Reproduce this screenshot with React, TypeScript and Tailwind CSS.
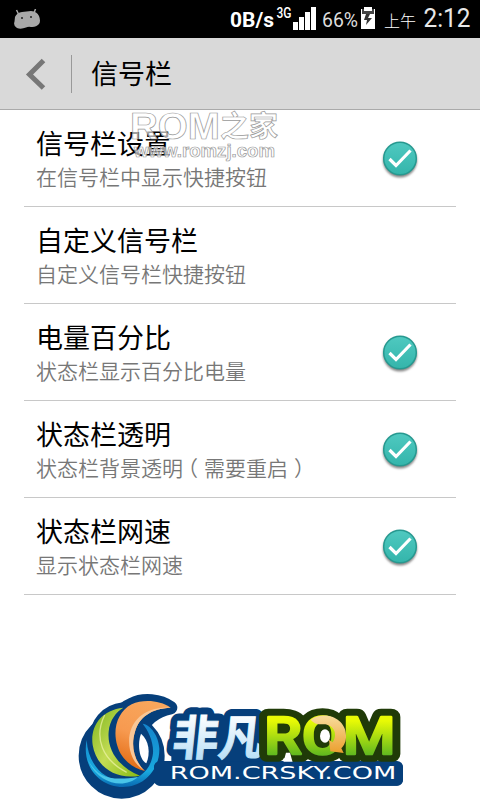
const rows = [
  { title: "信号栏设置", summary: "在信号栏中显示快捷按钮", checked: true },
  { title: "自定义信号栏", summary: "自定义信号栏快捷按钮", checked: false },
  { title: "电量百分比", summary: "状态栏显示百分比电量", checked: true },
  { title: "状态栏透明", summary: "状态栏背景透明（需要重启）", checked: true },
  { title: "状态栏网速", summary: "显示状态栏网速", checked: true },
];

function StatusBar() {
  return (
    <div className="flex h-[38px] items-center bg-black text-white">
      <svg className="ml-[14px]" width="27" height="20" viewBox="0 0 27 20">
        <path d="M2.500 1 4.500 5M21.500 0 20 4" stroke="#a9a9a9" strokeWidth="1.500" />
        <path
          d="M1 8Q3 3.500 8 3L17 2Q23 2.500 25 7Q27 12 25 15Q22 18.500 17 18Q14 17.500 12 18.500Q7 20.500 3 19Q-1 17 .5 12.500Z"
          fill="#a9a9a9"
        />
        <circle cx="8" cy="9" r="1" fill="#222" />
        <circle cx="17" cy="8" r="1" fill="#222" />
      </svg>
      <div className="relative ml-auto h-full w-[250px]">
        <svg width="250" height="38" viewBox="230 0 250 38" fill="#fff">
          <g fontFamily="Roboto, sans-serif">
            <text x="230" y="27" fontSize="20" fontWeight="700" textLength="44" lengthAdjust="spacingAndGlyphs">0B/s</text>
            <text x="276.500" y="17.500" fontSize="14" fontWeight="500" textLength="15" lengthAdjust="spacingAndGlyphs">3G</text>
            <text x="322" y="27" fontSize="20" textLength="36" lengthAdjust="spacingAndGlyphs" fill="#ddd">66%</text>
            <text x="423.500" y="27" fontSize="25" textLength="47" lengthAdjust="spacingAndGlyphs" fill="#e8e8e8">2:12</text>
          </g>
          <text x="384" y="26.500" fontSize="16" fontFamily="'Noto Sans CJK SC', sans-serif" fontWeight="300">上午</text>
          <path d="M293 22h5v8h-5zM299 17h5v13h-5zM305 12h5v18h-5zM311 7h5v23h-5z" />
          <path d="M364 7h8v2h3v20h-14V9h3z" />
          <path d="M362 9h2v2h8V9h2v5h-12z" fill="#444" />
          <path d="M366 14h4l-2 4h4l-6 7 1-5h-3z" fill="#333" />
        </svg>
      </div>
    </div>
  );
}

function Header() {
  return (
    <header className="flex h-[72px] items-center border-b border-[#aaa] bg-[#d9d9d9]">
      <svg className="ml-[25px]" width="22" height="32" viewBox="0 0 22 32">
        <path d="M18.500 2.500 4.500 16.500 18.500 30" fill="none" stroke="#777" strokeWidth="5" />
      </svg>
      <div className="ml-6 h-[38px] w-px bg-[#999]" />
      <h1 className="-mt-[2px] ml-[19px] text-[27px] leading-[40px]">信号栏</h1>
    </header>
  );
}

function Check() {
  return (
    <svg className="mt-[3px] mr-[37px]" width="38" height="40" viewBox="0 0 38 40">
      <defs>
        <linearGradient id="teal" x2="0" y2="1">
          <stop stopColor="#4fc9c0" />
          <stop offset="1" stopColor="#34b5ab" />
        </linearGradient>
        <filter id="soft" x="-20%" y="-20%" width="140%" height="140%">
          <feGaussianBlur stdDeviation="1" />
        </filter>
      </defs>
      <circle cx="19" cy="20.500" r="17" fill="#888" filter="url(#soft)" />
      <circle cx="19" cy="18.500" r="16.300" fill="url(#teal)" stroke="#279990" strokeWidth="1.500" />
      <path d="m8.500 19 6.500 6.500L29.500 10.500" fill="none" stroke="#fff" strokeWidth="3.200" />
    </svg>
  );
}

function Watermark() {
  return (
    <svg className="absolute left-[130px] top-[98px]" width="155" height="70" viewBox="130 98 155 70">
      <g fill="#fff" fillOpacity=".65" stroke="#999" strokeWidth=".7">
        <text x="130" y="138.500" fontSize="37" fontWeight="700" fontFamily="'Liberation Sans', sans-serif" textLength="90" lengthAdjust="spacingAndGlyphs">ROM</text>
        <text x="220" y="137" fontSize="29" fontWeight="700" fontFamily="'Noto Sans CJK SC', sans-serif">之家</text>
        <text x="134" y="156.500" fontSize="18" fontWeight="700" fontFamily="'Liberation Sans', sans-serif" textLength="141" lengthAdjust="spacingAndGlyphs">www.romzj.com</text>
      </g>
    </svg>
  );
}

function Logo() {
  return (
    <svg className="absolute left-[70px] top-[685px]" width="340" height="115" viewBox="0 0 1020 345">
      <defs>
        <linearGradient id="green" x2="1" y2="1">
          <stop stopColor="#7fb51c" />
          <stop offset=".5" stopColor="#c3dc55" />
          <stop offset="1" stopColor="#86bb12" />
        </linearGradient>
        <linearGradient id="orange" x1=".6" x2=".3" y2="1">
          <stop stopColor="#f8a65c" />
          <stop offset=".5" stopColor="#f79a50" />
          <stop offset="1" stopColor="#e26a12" />
        </linearGradient>
        <linearGradient id="blue" x2="0" y2="1">
          <stop stopColor="#1483cb" />
          <stop offset=".75" stopColor="#19a9df" />
          <stop offset="1" stopColor="#0868b0" />
        </linearGradient>
        <linearGradient id="ice" x2="0" y2="1">
          <stop offset=".2" stopColor="#fff" />
          <stop offset=".85" stopColor="#b9e0f7" />
        </linearGradient>
        <linearGradient id="lime" x2="0" y2="1">
          <stop offset=".25" stopColor="#e8fa05" />
          <stop offset=".8" stopColor="#61b91f" />
        </linearGradient>
        <linearGradient id="gold" x2="0" y2="1">
          <stop stopColor="#f8dc9c" />
          <stop offset="1" stopColor="#eb9f2e" />
        </linearGradient>
      </defs>

      <g fill="#063f7b" stroke="#063f7b" strokeLinejoin="round">
        <circle cx="155" cy="212" r="112" strokeWidth="34" />
        <path d="M302 68C270 45 220 40 185 58C120 85 128 170 225 258C180 190 200 90 302 68Z" strokeWidth="40" />
        <path d="M160 68C50 80 30 240 210 272Z" strokeWidth="32" />
      </g>
      <path d="M213 146C237 165 242 205 229 235C206 222 202 175 213 146Z" fill="#fff" />
      <path d="M50 165C34 245 90 306 158 306C225 306 270 250 268 190C266 152 241 119 218 116C235 137 251 170 249 205C244 252 209 285 165 287C99 289 54 235 50 165Z" fill="url(#blue)" />
      <path d="M54 225C83 277 121 289 204 276C165 312 85 300 54 225Z" fill="#49c4e8" />
      <path d="M160 68C91 75 60 127 68 180C78 245 137 286 210 272C144 246 111 193 116 140C119 105 139 80 160 68Z" fill="url(#green)" />
      <path d="M104 90C70 160 98 225 170 262" fill="none" stroke="#f0f3a8" strokeWidth="4" opacity=".7" />
      <path d="M302 68C270 46 220 42 185 58C142 80 127 135 142 182C153 222 189 251 225 258C189 225 183 178 195 140C207 97 244 70 302 68Z" fill="url(#orange)" />
      <path d="M302 68C215 63 165 120 180 195C188 230 207 247 225 258C189 225 183 178 195 140C207 97 244 70 302 68Z" fill="#f9c797" />

      <rect x="252" y="228" width="747" height="74" rx="18" fill="#063f7b" />
      <rect x="304" y="195" width="270" height="50" fill="#063f7b" />
      <g transform="translate(304 210) skewX(-6)">
        <text
          fontSize="142"
          fontWeight="700"
          fontFamily="'Noto Sans CJK SC', sans-serif"
          textLength="274"
          lengthAdjust="spacingAndGlyphs"
          fill="#063f7b"
          stroke="#063f7b"
          strokeWidth="46"
          strokeLinejoin="round"
        >
          非凡
        </text>
        <text
          fontSize="142"
          fontWeight="700"
          fontFamily="'Noto Sans CJK SC', sans-serif"
          textLength="274"
          lengthAdjust="spacingAndGlyphs"
          fill="url(#ice)"
          stroke="url(#ice)"
          strokeWidth="3"
        >
          非凡
        </text>
      </g>
      <g fontFamily="Roboto, sans-serif" fontWeight="500" fontSize="158" strokeLinejoin="round">
        <text x="583" y="208" textLength="393" lengthAdjust="spacingAndGlyphs" fill="#203b08" stroke="#203b08" strokeWidth="50">ROM</text>
        <text x="583" y="208" textLength="393" lengthAdjust="spacingAndGlyphs" fill="url(#lime)" stroke="url(#lime)" strokeWidth="8">ROM</text>
      </g>
      <ellipse cx="765" cy="153" rx="15" ry="20" fill="#fff" />
      <path d="M722 104C762 76 827 98 828 151C829 170 822 182 814 190L821 204 781 199 777 164 788 172C805 148 791 118 761 118C747 118 735 119 722 104Z" fill="url(#gold)" />
      <path d="M640 232L648 203H660L668 232Z" fill="#fff" />
      <rect x="252" y="230" width="747" height="72" rx="18" fill="#063f7b" />
      <text x="299" y="283" fontSize="53" fontFamily="'DejaVu Sans', sans-serif" textLength="680" lengthAdjust="spacingAndGlyphs" fill="#fff">ROM.CRSKY.COM</text>
    </svg>
  );
}

// Centre the full-width brackets in their cells
function Summary({ text }: { text: string }) {
  return (
    <div className="text-[21px] font-[350] leading-[31px] text-[#777]">
      {text.split(/([（）])/).map((part, i) => {
        if (part === "（") return <span key={i} className="inline-block -translate-x-[6px]">{part}</span>;
        if (part === "）") return <span key={i} className="inline-block translate-x-[6px]">{part}</span>;
        return part;
      })}
    </div>
  );
}

export default function App() {
  return (
    <div className="relative h-[800px] w-[480px] overflow-hidden bg-white font-['Noto_Sans_CJK_SC',sans-serif] text-black">
      <StatusBar />
      <Header />
      <main className="px-6">
        {rows.map((row) => (
          <div key={row.title} className="flex h-[97px] items-center justify-between border-b border-[#c8c8c8]">
            <div className="pl-3">
              <div className="mt-px text-[27px] leading-[36px]">{row.title}</div>
              <Summary text={row.summary} />
            </div>
            {row.checked && <Check />}
          </div>
        ))}
      </main>
      <Watermark />
      <Logo />
    </div>
  );
}
